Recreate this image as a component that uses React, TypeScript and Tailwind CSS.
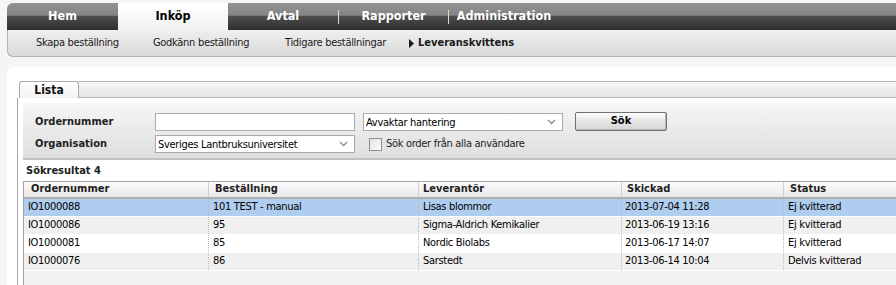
const rows = [
  { o: "IO1000088", b: "101 TEST - manual", l: "Lisas blommor", s: "2013-07-04 11:28", st: "Ej kvitterad", sel: true },
  { o: "IO1000086", b: "95", l: "Sigma-Aldrich Kemikalier", s: "2013-06-19 13:16", st: "Ej kvitterad" },
  { o: "IO1000081", b: "85", l: "Nordic Biolabs", s: "2013-06-17 14:07", st: "Ej kvitterad" },
  { o: "IO1000076", b: "86", l: "Sarstedt", s: "2013-06-14 10:04", st: "Delvis kvitterad" },
];

function Chevron() {
  return (
    <svg width="9" height="6" viewBox="0 0 9 6" className="shrink-0">
      <path d="M1 1 L4.5 4.5 L8 1" fill="none" stroke="#8c8c8c" strokeWidth="1.3" />
    </svg>
  );
}

function SelectBox({ text }: { text: string }) {
  return (
    <div className="w-[200px] h-[18px] bg-white border border-[#a7abb0] flex items-center pl-[2px] pr-[6px]">
      <span className="flex-1 tracking-[-0.3px] leading-none">{text}</span>
      <Chevron />
    </div>
  );
}

const navItem = "flex items-center justify-center font-bold text-[12.5px]";

export default function App() {
  return (
    <div className="w-[896px] h-[285px] overflow-hidden bg-[#f5f5f5] text-[11px] text-black font-['DejaVu_Sans_Condensed','DejaVu_Sans',sans-serif] flex flex-col">
      {/* Navigation */}
      <div className="pt-[3px] pl-[7px] shrink-0">
        <div className="h-[27px] flex rounded-tl-[6px] overflow-hidden bg-[linear-gradient(to_bottom,#929292_0%,#858585_45%,#4e4e4e_50%,#3a3a3a_80%,#2e2e2e_100%)]">
          <div className={`${navItem} w-[111px] text-white`}>Hem</div>
          <div className={`${navItem} w-[110px] text-black bg-[linear-gradient(to_bottom,#ffffff,#f1f1f1)]`}>Inköp</div>
          <div className={`${navItem} w-[110px] text-white`}>Avtal</div>
          <div className="flex items-center"><div className="w-px h-[14px] bg-[#d8d8d8]" /></div>
          <div className={`${navItem} w-[109px] text-white`}>Rapporter</div>
          <div className="flex items-center"><div className="w-px h-[14px] bg-[#d8d8d8]" /></div>
          <div className={`${navItem} w-[110px] text-white`}>Administration</div>
        </div>
        <div className="h-[27px] flex items-center bg-[linear-gradient(to_bottom,#efefef,#d9d9d9)] border-b border-l border-[#b3b3b3] rounded-bl-[6px] text-[#1a1a1a] tracking-[-0.3px]">
          <div className="w-[117px] ml-[28px]">Skapa beställning</div>
          <div className="w-[132px]">Godkänn beställning</div>
          <div className="w-[124px]">Tidigare beställningar</div>
          <div className="flex items-center gap-[4px] font-bold tracking-normal">
            <svg width="5" height="9" viewBox="0 0 5 9"><path d="M0 0 L5 4.5 L0 9 Z" fill="#1a1a1a" /></svg>
            <span>Leveranskvittens</span>
          </div>
        </div>
      </div>

      {/* Main panel */}
      <div className="mt-[10px] ml-[7px] flex-1 bg-white rounded-tl-[6px] pt-[14px] flex flex-col">
        {/* Tab strip */}
        <div className="ml-[12px] h-[17px] flex shrink-0 relative z-10">
          <div className="w-[60px] h-[17px] border border-b-0 border-[#a9a9a9] rounded-t-[3px] bg-[linear-gradient(to_bottom,#ffffff,#f3f3f3)] flex items-center justify-center font-bold text-[12px] text-[#111]">
            Lista
          </div>
          <div className="flex-1 h-[17px] border-t border-b border-[#b5b5b5] bg-[linear-gradient(to_bottom,#f7f7f7,#e6e6e6)]" />
        </div>
        {/* Box */}
        <div className="ml-[10px] flex-1 border-l border-[#a9a9a9] pl-[5px] pt-[5px] flex flex-col">
          {/* Search area */}
          <div className="h-[57px] shrink-0 rounded-tl-[5px] bg-[linear-gradient(to_bottom,#f6f6f6,#dedede)] border-b-2 border-[#c2c2c2] pl-[12px] pt-[10px] flex flex-col gap-[4px]">
            <div className="flex items-center h-[18px]">
              <div className="w-[120px] font-bold text-[#222]">Ordernummer</div>
              <div className="w-[200px] h-[18px] bg-white border border-[#a7abb0]" />
              <div className="ml-[8px]"><SelectBox text="Avvaktar hantering" /></div>
              <button className="ml-[12px] w-[92px] h-[19px] -mt-px rounded-[2px] border border-[#707070] bg-[linear-gradient(to_bottom,#fdfdfd,#e4e4e4_50%,#d6d6d6)] shadow-[inset_-1px_-1px_0_#b8b8b8] font-bold text-[11px] text-black flex items-center justify-center">
                Sök
              </button>
            </div>
            <div className="flex items-center h-[18px]">
              <div className="w-[120px] font-bold text-[#222]">Organisation</div>
              <SelectBox text="Sveriges Lantbruksuniversitet" />
              <div className="ml-[14px] w-[13px] h-[13px] border border-[#8e8f8f] bg-[linear-gradient(135deg,#e0e0e0,#ffffff)]" />
              <div className="ml-[4px] tracking-[-0.3px] text-[#222]">Sök order från alla användare</div>
            </div>
          </div>

          <div className="pl-[3px] pt-[2px] h-[21px] flex items-center font-bold text-[#222] shrink-0">Sökresultat 4</div>

          {/* Table */}
          <div className="flex-1 w-[1000px] border-l border-t border-[#a3a3a3] bg-[#f2f2f2] flex flex-col">
            <div className="h-[15px] flex font-bold text-[#222] bg-[linear-gradient(to_bottom,#fbfbfb,#e9e9e9)] border-b-2 border-[#b0b0b0] box-content">
              <div className="w-[185px] pl-[7px] flex items-center border-r border-[#d0d0d0]">Ordernummer</div>
              <div className="w-[210px] pl-[6px] flex items-center border-r border-[#d0d0d0]">Beställning</div>
              <div className="w-[203px] pl-[4px] flex items-center border-r border-[#d0d0d0]">Leverantör</div>
              <div className="w-[162px] pl-[5px] flex items-center border-r border-[#d0d0d0]">Skickad</div>
              <div className="flex-1 pl-[6px] flex items-center">Status</div>
            </div>
            {rows.map((r, i) => (
              <div
                key={r.o}
                className={`h-[18px] flex border-b border-white tracking-[-0.3px] ${r.sel ? "bg-[#afcdee]" : i % 2 === 1 ? "bg-[#f0f0f0]" : "bg-white"}`}
              >
                <div className="w-[185px] pl-[4px] flex items-center border-r border-dotted border-[#b9b9b9]">{r.o}</div>
                <div className="w-[210px] pl-[4px] flex items-center border-r border-dotted border-[#b9b9b9]">{r.b}</div>
                <div className="w-[203px] pl-[4px] flex items-center border-r border-dotted border-[#b9b9b9]">{r.l}</div>
                <div className="w-[162px] pl-[3px] flex items-center border-r border-dotted border-[#b9b9b9]">{r.s}</div>
                <div className="flex-1 pl-[4px] flex items-center">{r.st}</div>
              </div>
            ))}
          </div>
        </div>
      </div>
    </div>
  );
}
